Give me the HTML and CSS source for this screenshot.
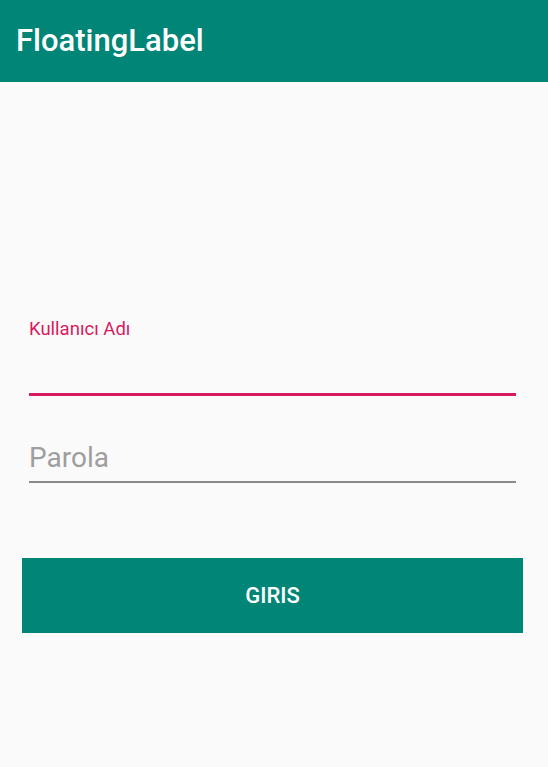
FILE: index.html
```html
<!DOCTYPE html>
<html lang="tr">
<head>
<meta charset="utf-8">
<link rel="stylesheet" href="styles.css">
</head>
<body>
<header class="appbar"><h1 class="title">FloatingLabel</h1></header>
<main class="content">
  <div class="field field-focused">
    <label class="float-label">Kullanıcı Adı</label>
    <div class="input-line"></div>
  </div>
  <div class="field field-idle">
    <span class="placeholder">Parola</span>
  </div>
  <button class="btn">GIRIS</button>
</main>
</body>
</html>
```
FILE: styles.css
```css
html, body { margin: 0; padding: 0; }
body {
  background: #fafafa;
  font-family: Roboto, "Noto Sans", sans-serif;
  width: 548px;
  height: 767px;
  overflow: hidden;
}
.appbar {
  background: #008577;
  height: 82px;
  display: flex;
  align-items: center;
  padding-left: 16px;
  box-sizing: border-box;
}
.title {
  margin: 0;
  color: #fff;
  font-size: 31px;
  font-weight: 500;
  line-height: 1;
  padding-bottom: 2px;
}
.content {
  display: flex;
  flex-direction: column;
  padding: 0 25px 0 22px;
}
.field {
  margin: 0 7px;
}
.field-focused {
  padding-top: 237px;
}
.float-label {
  display: block;
  color: #d81b60;
  font-size: 18.5px;
  line-height: 20px;
}
.input-line {
  margin-top: 54px;
  height: 3px;
  background: #d81b60;
}
.field-idle {
  margin-top: 46px;
  border-bottom: 2px solid #8a8a8a;
  height: 39px;
}
.placeholder {
  display: block;
  color: #9e9e9e;
  font-size: 28px;
  line-height: 32px;
}
.btn {
  margin-top: 75px;
  height: 75px;
  border: none;
  background: #008577;
  color: #fff;
  font-family: Roboto, sans-serif;
  font-size: 22px;
  font-weight: 500;
  padding: 0;
}
```
